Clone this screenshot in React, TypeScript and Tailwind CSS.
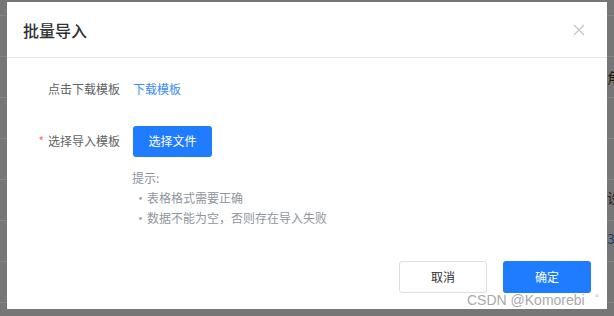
import React from "react";

export default function App() {
  return (
    <div
      className="relative w-[614px] h-[316px] overflow-hidden bg-[repeating-linear-gradient(180deg,#767676_0px,#767676_15px,#858585_15px,#858585_16px,#767676_16px,#767676_41px)] font-['Noto_Sans_CJK_SC','Noto_Sans',sans-serif]"
    >
      <div className="flex pt-[2px] pl-[7px]">
        {/* Dialog */}
        <div className="w-[600px] h-[307px] bg-white flex flex-col">
          {/* Header */}
          <div className="h-[56px] flex items-center justify-between pl-[16px] pr-[22px] border-b border-[#e6e6e6]">
            <span className="text-[16px] text-[#303133] font-medium leading-none">批量导入</span>
            <svg width="12" height="12" viewBox="0 0 12 12" className="text-[#c0c4cc]">
              <path d="M1 1L11 11M11 1L1 11" stroke="currentColor" strokeWidth="1.1" fill="none" />
            </svg>
          </div>
          {/* Body */}
          <div className="flex-1 pl-[25px] pt-[15px]">
            <div className="flex items-center h-[32px]">
              <div className="w-[100px] pr-[12px] text-right text-[12px] text-[#606266]">点击下载模板</div>
              <span className="pl-[1px] text-[12px] text-[#3a8ef6]">下载模板</span>
            </div>
            <div className="flex items-center h-[32px] mt-[20px]">
              <div className="w-[100px] pr-[12px] text-right text-[12px] text-[#606266]">
                <span className="text-[#f56c6c] mr-[4px]">*</span>选择导入模板
              </div>
              <button className="ml-[1px] w-[79px] h-[31px] rounded-[3px] bg-[#1f7cff] text-white text-[12px]">选择文件</button>
            </div>
            <div className="pl-[100px] mt-[11px] text-[12px] text-[#8f959e] leading-[20px]">
              <div>提示:</div>
              <div className="flex items-center">
                <span className="w-[15px] pl-[2px] text-[13px] text-[#a0a6ae]">•</span>
                <span>表格格式需要正确</span>
              </div>
              <div className="flex items-center">
                <span className="w-[15px] pl-[2px] text-[13px] text-[#a0a6ae]">•</span>
                <span>数据不能为空，否则存在导入失败</span>
              </div>
            </div>
          </div>
          {/* Footer */}
          <div className="flex justify-end gap-[16px] pr-[16px] pb-[16px]">
            <button className="w-[88px] h-[32px] rounded-[3px] border border-[#dcdfe6] bg-white text-[12px] text-[#303133]">取消</button>
            <button className="w-[88px] h-[32px] rounded-[3px] bg-[#1f7cff] text-white text-[12px]">确定</button>
          </div>
        </div>
        {/* Right strip glimpses */}
        <div className="w-[7px] flex flex-col overflow-hidden text-[14px] text-[#1c1c1c] leading-none">
          <span className="mt-[68px] whitespace-nowrap">角</span>
          <span className="mt-[106px] whitespace-nowrap">设</span>
          <span className="mt-[27px] whitespace-nowrap text-[#1e3a70]">3</span>
        </div>
      </div>
      {/* Watermark */}
      <div className="absolute left-[467px] top-[291px] text-[14px] leading-[18px] text-[#a9a9a9] font-['Liberation_Sans',sans-serif] whitespace-nowrap">
        CSDN @Komorebi
      </div>
      <div className="absolute left-[595px] top-[292px] text-[9px] text-[#b0b0b0] font-['Liberation_Sans',sans-serif]">°</div>
    </div>
  );
}
